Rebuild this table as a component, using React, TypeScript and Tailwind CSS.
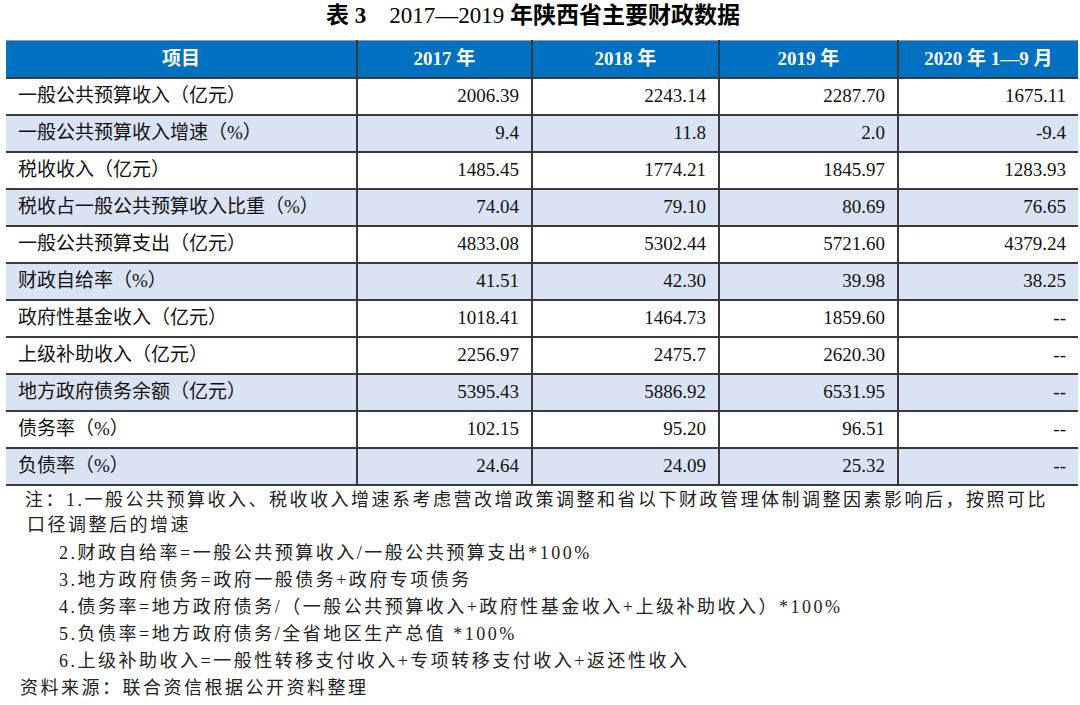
const rows: { label: string; values: string[]; shaded: boolean }[] = [
  { label: "一般公共预算收入（亿元）", values: ["2006.39", "2243.14", "2287.70", "1675.11"], shaded: false },
  { label: "一般公共预算收入增速（%）", values: ["9.4", "11.8", "2.0", "-9.4"], shaded: true },
  { label: "税收收入（亿元）", values: ["1485.45", "1774.21", "1845.97", "1283.93"], shaded: false },
  { label: "税收占一般公共预算收入比重（%）", values: ["74.04", "79.10", "80.69", "76.65"], shaded: true },
  { label: "一般公共预算支出（亿元）", values: ["4833.08", "5302.44", "5721.60", "4379.24"], shaded: false },
  { label: "财政自给率（%）", values: ["41.51", "42.30", "39.98", "38.25"], shaded: true },
  { label: "政府性基金收入（亿元）", values: ["1018.41", "1464.73", "1859.60", "--"], shaded: false },
  { label: "上级补助收入（亿元）", values: ["2256.97", "2475.7", "2620.30", "--"], shaded: false },
  { label: "地方政府债务余额（亿元）", values: ["5395.43", "5886.92", "6531.95", "--"], shaded: true },
  { label: "债务率（%）", values: ["102.15", "95.20", "96.51", "--"], shaded: false },
  { label: "负债率（%）", values: ["24.64", "24.09", "25.32", "--"], shaded: true },
];

const headers = ["项目", "2017 年", "2018 年", "2019 年", "2020 年 1—9 月"];

const notes = [
  "2.财政自给率=一般公共预算收入/一般公共预算支出*100%",
  "3.地方政府债务=政府一般债务+政府专项债务",
  "4.债务率=地方政府债务/（一般公共预算收入+政府性基金收入+上级补助收入）*100%",
  "5.负债率=地方政府债务/全省地区生产总值 *100%",
  "6.上级补助收入=一般性转移支付收入+专项转移支付收入+返还性收入",
];

export default function App() {
  return (
    <div
      className="w-[1080px] h-[705px] bg-white text-[#111] overflow-hidden"
      style={{ fontFamily: '"Liberation Serif", "Noto Sans CJK SC", serif' }}
    >
      {/* title */}
      <div className="h-[40px] flex justify-center items-start pt-[2px] pr-[14px]">
        <h1 className="text-[23px] leading-[28px] text-black">
          <span className="font-bold">表 3</span>
          <span className="font-normal">　2017—2019 </span>
          <span className="font-bold">年陕西省主要财政数据</span>
        </h1>
      </div>

      <table className="ml-[6px] w-[1072px] table-fixed border-collapse text-[19px]">
        <colgroup>
          <col className="w-[351px]" />
          <col className="w-[175px]" />
          <col className="w-[187px]" />
          <col className="w-[179px]" />
          <col className="w-[180px]" />
        </colgroup>
        <thead>
          <tr className="h-[37px] bg-[#0070c0] border-t border-t-[#9a9a9a] border-b-2 border-b-[#3a3a3a]">
            {headers.map((h, i) => (
              <th
                key={h}
                className={`font-bold text-white text-center p-0 ${i > 0 ? "border-l-2 border-l-[#3a3a3a]" : ""}`}
              >
                {h}
              </th>
            ))}
          </tr>
        </thead>
        <tbody>
          {rows.map((r) => (
            <tr
              key={r.label}
              className={`h-[37px] border-b-2 border-b-[#3a3a3a] ${r.shaded ? "bg-[#dae3f3]" : "bg-white"}`}
            >
              <td className="pl-3 pr-1 py-0 text-left whitespace-nowrap">{r.label}</td>
              {r.values.map((v, i) => (
                <td key={i} className="border-l-2 border-l-[#3a3a3a] pr-3 py-0 text-right">
                  {v}
                </td>
              ))}
            </tr>
          ))}
        </tbody>
      </table>

      {/* notes */}
      <div className="pt-[2px] text-[18px] tracking-[2.5px] text-[#222]">
        <div className="pl-[25px] leading-[25px] whitespace-nowrap">
          注：1.一般公共预算收入、税收收入增速系考虑营改增政策调整和省以下财政管理体制调整因素影响后，按照可比
        </div>
        <div className="pl-[27px] leading-[25px]">口径调整后的增速</div>
        <div className="mt-[2px] leading-[27px]">
          {notes.map((n) => (
            <div key={n} className="pl-[59px] whitespace-nowrap">
              {n}
            </div>
          ))}
          <div className="pl-[20px]">资料来源：联合资信根据公开资料整理</div>
        </div>
      </div>
    </div>
  );
}
